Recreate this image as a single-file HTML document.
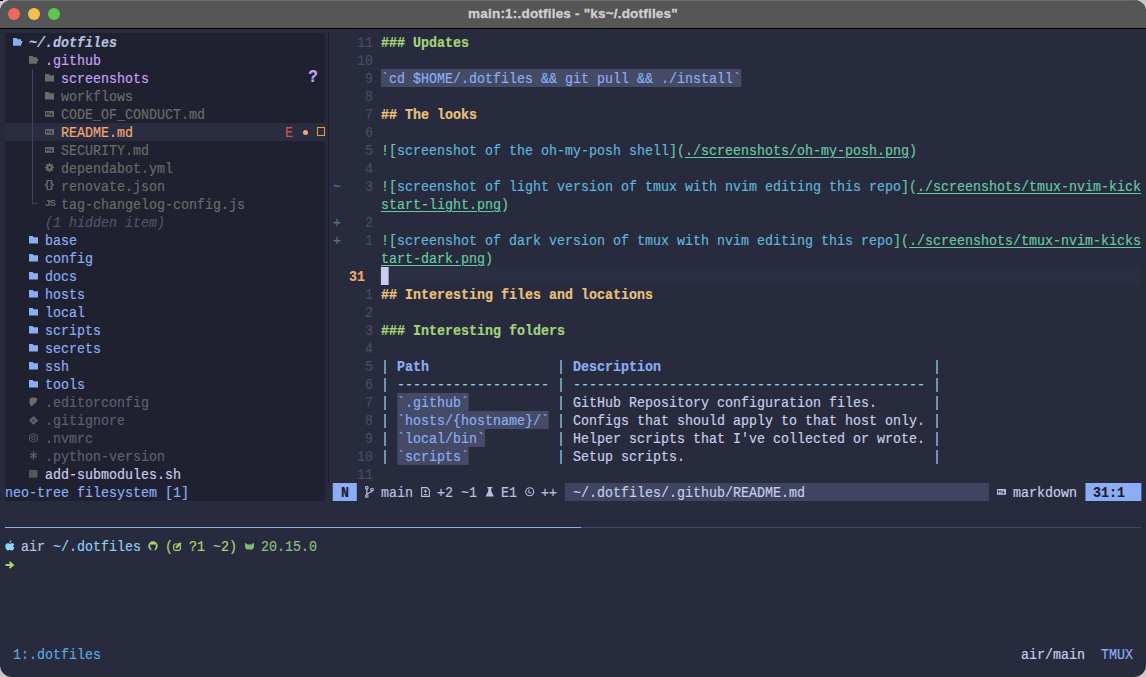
<!DOCTYPE html>
<html><head><meta charset="utf-8"><style>
html,body{margin:0;padding:0;width:1146px;height:677px;overflow:hidden;background:#c8c8c8}
#win{position:absolute;left:0;top:0;width:1146px;height:677px;border-radius:12px;overflow:hidden;background:#282b3d}
#title{position:absolute;left:0;top:0;width:1146px;height:28px;background:#565656;border-bottom:1px solid #000;box-shadow:inset 0 1px 0 #6a6a6a}
#title .tt{position:absolute;left:0;width:1146px;top:6px;text-align:center;-webkit-text-stroke:0.3px #d0d0d0;font:bold 13.5px "Liberation Sans",sans-serif;letter-spacing:0.2px;color:#d0d0d0}
.dot{position:absolute;top:8px;width:12px;height:12px;border-radius:50%}
#term{position:absolute;left:5px;top:33px;width:1320.6000000000001px;height:630px;transform:scaleX(0.860215);transform-origin:0 0}
.b{position:absolute}
.t{position:absolute;white-space:pre;-webkit-text-stroke:0.2px currentColor;font-family:"Liberation Mono",monospace;font-size:15.5px;line-height:18px;height:18px}
</style></head><body>
<div id="win">
<div id="title"><div class="dot" style="left:8px;background:#ed6a5e"></div><div class="dot" style="left:28px;background:#f5bf4f"></div><div class="dot" style="left:48px;background:#61c554"></div>
<div class="tt">main:1:.dotfiles - "ks~/.dotfiles"</div></div>
<div id="term">
<div class="b" style="left:0.00px;top:0px;width:372.00px;height:468px;background:#1f2131"></div>
<div class="b" style="left:0.00px;top:90px;width:372.00px;height:18px;background:#2a2d40"></div>
<div class="b" style="left:437.10px;top:36px;width:418.50px;height:18px;background:#454a66"></div>
<div class="b" style="left:437.10px;top:234px;width:883.50px;height:18px;background:#2a2e42"></div>
<div class="b" style="left:437.10px;top:234px;width:9.30px;height:18px;background:#c6cbf3"></div>
<div class="b" style="left:455.70px;top:360px;width:83.70px;height:18px;background:#454a66"></div>
<div class="b" style="left:455.70px;top:378px;width:176.70px;height:18px;background:#454a66"></div>
<div class="b" style="left:455.70px;top:396px;width:102.30px;height:18px;background:#454a66"></div>
<div class="b" style="left:455.70px;top:414px;width:83.70px;height:18px;background:#454a66"></div>
<div class="b" style="left:381.30px;top:450px;width:27.90px;height:18px;background:#8aadf4"></div>
<div class="b" style="left:651.00px;top:450px;width:492.90px;height:18px;background:#3f4461"></div>
<div class="b" style="left:1255.50px;top:450px;width:65.10px;height:18px;background:#8aadf4"></div>
<span class="t" style="left:27.90px;top:1px;color:#b8c0e0;font-weight:bold;font-style:italic">~/.dotfiles</span>
<span class="t" style="left:46.50px;top:19px;color:#c6a0f6">.github</span>
<span class="t" style="left:65.10px;top:37px;color:#c6a0f6">screenshots</span>
<span class="t" style="left:353.40px;top:37px;color:#c6a0f6;font-weight:bold;font-size:18.5px;margin-top:-1px;margin-left:-1px">?</span>
<span class="t" style="left:65.10px;top:55px;color:#6b6b67">workflows</span>
<span class="t" style="left:65.10px;top:73px;color:#6b6b67">CODE_OF_CONDUCT.md</span>
<span class="t" style="left:65.10px;top:91px;color:#f0a870">README.md</span>
<span class="t" style="left:325.50px;top:91px;color:#c9564e">E</span>
<span class="t" style="left:65.10px;top:109px;color:#6b6b67">SECURITY.md</span>
<span class="t" style="left:65.10px;top:127px;color:#6b6b67">dependabot.yml</span>
<span class="t" style="left:65.10px;top:145px;color:#6b6b67">renovate.json</span>
<span class="t" style="left:65.10px;top:163px;color:#6b6b67">tag-changelog-config.js</span>
<span class="t" style="left:46.50px;top:181px;color:#51546a;font-style:italic">(1 hidden item)</span>
<span class="t" style="left:46.50px;top:199px;color:#8aadf4">base</span>
<span class="t" style="left:46.50px;top:217px;color:#8aadf4">config</span>
<span class="t" style="left:46.50px;top:235px;color:#8aadf4">docs</span>
<span class="t" style="left:46.50px;top:253px;color:#8aadf4">hosts</span>
<span class="t" style="left:46.50px;top:271px;color:#8aadf4">local</span>
<span class="t" style="left:46.50px;top:289px;color:#8aadf4">scripts</span>
<span class="t" style="left:46.50px;top:307px;color:#8aadf4">secrets</span>
<span class="t" style="left:46.50px;top:325px;color:#8aadf4">ssh</span>
<span class="t" style="left:46.50px;top:343px;color:#8aadf4">tools</span>
<span class="t" style="left:46.50px;top:361px;color:#5d6070">.editorconfig</span>
<span class="t" style="left:46.50px;top:379px;color:#5d6070">.gitignore</span>
<span class="t" style="left:46.50px;top:397px;color:#5d6070">.nvmrc</span>
<span class="t" style="left:46.50px;top:415px;color:#5d6070">.python-version</span>
<span class="t" style="left:46.50px;top:433px;color:#c6cce9">add-submodules.sh</span>
<span class="t" style="left:0.00px;top:451px;color:#8aadf4">neo-tree filesystem [1]</span>
<span class="t" style="left:409.20px;top:1px;color:#494d64">11</span>
<span class="t" style="left:409.20px;top:19px;color:#494d64">10</span>
<span class="t" style="left:418.50px;top:37px;color:#494d64">9</span>
<span class="t" style="left:418.50px;top:55px;color:#494d64">8</span>
<span class="t" style="left:418.50px;top:73px;color:#494d64">7</span>
<span class="t" style="left:418.50px;top:91px;color:#494d64">6</span>
<span class="t" style="left:418.50px;top:109px;color:#494d64">5</span>
<span class="t" style="left:418.50px;top:127px;color:#494d64">4</span>
<span class="t" style="left:418.50px;top:145px;color:#494d64">3</span>
<span class="t" style="left:418.50px;top:181px;color:#494d64">2</span>
<span class="t" style="left:418.50px;top:199px;color:#494d64">1</span>
<span class="t" style="left:418.50px;top:253px;color:#494d64">1</span>
<span class="t" style="left:418.50px;top:271px;color:#494d64">2</span>
<span class="t" style="left:418.50px;top:289px;color:#494d64">3</span>
<span class="t" style="left:418.50px;top:307px;color:#494d64">4</span>
<span class="t" style="left:418.50px;top:325px;color:#494d64">5</span>
<span class="t" style="left:418.50px;top:343px;color:#494d64">6</span>
<span class="t" style="left:418.50px;top:361px;color:#494d64">7</span>
<span class="t" style="left:418.50px;top:379px;color:#494d64">8</span>
<span class="t" style="left:418.50px;top:397px;color:#494d64">9</span>
<span class="t" style="left:409.20px;top:415px;color:#494d64">10</span>
<span class="t" style="left:409.20px;top:433px;color:#494d64">11</span>
<span class="t" style="left:399.90px;top:235px;color:#f0a870;font-weight:bold">31</span>
<span class="t" style="left:381.30px;top:145px;color:#5a6d9c">~</span>
<span class="t" style="left:381.30px;top:181px;color:#4f7d62">+</span>
<span class="t" style="left:381.30px;top:199px;color:#4f7d62">+</span>
<span class="t" style="left:437.10px;top:1px;color:#a3d378;font-weight:bold">### Updates</span>
<span class="t" style="left:437.10px;top:37px;color:#8aadf4">`cd $HOME/.dotfiles &amp;&amp; git pull &amp;&amp; ./install`</span>
<span class="t" style="left:437.10px;top:73px;color:#e8c17a;font-weight:bold">## The looks</span>
<span class="t" style="left:437.10px;top:109px;color:#66c9a0">![</span>
<span class="t" style="left:455.70px;top:109px;color:#5fb4dc">screenshot of the oh-my-posh shell</span>
<span class="t" style="left:771.90px;top:109px;color:#66c9a0">](</span>
<span class="t" style="left:790.50px;top:109px;color:#66c9a0;text-decoration:underline;text-underline-offset:1.8px;text-decoration-thickness:1.3px">./screenshots/oh-my-posh.png</span>
<span class="t" style="left:1050.90px;top:109px;color:#66c9a0">)</span>
<span class="t" style="left:437.10px;top:145px;color:#66c9a0">![</span>
<span class="t" style="left:455.70px;top:145px;color:#5fb4dc">screenshot of light version of tmux with nvim editing this repo</span>
<span class="t" style="left:1041.60px;top:145px;color:#66c9a0">](</span>
<span class="t" style="left:1060.20px;top:145px;color:#66c9a0;text-decoration:underline;text-underline-offset:1.8px;text-decoration-thickness:1.3px">./screenshots/tmux-nvim-kick</span>
<span class="t" style="left:437.10px;top:163px;color:#66c9a0;text-decoration:underline;text-underline-offset:1.8px;text-decoration-thickness:1.3px">start-light.png</span>
<span class="t" style="left:576.60px;top:163px;color:#66c9a0">)</span>
<span class="t" style="left:437.10px;top:199px;color:#66c9a0">![</span>
<span class="t" style="left:455.70px;top:199px;color:#5fb4dc">screenshot of dark version of tmux with nvim editing this repo</span>
<span class="t" style="left:1032.30px;top:199px;color:#66c9a0">](</span>
<span class="t" style="left:1050.90px;top:199px;color:#66c9a0;text-decoration:underline;text-underline-offset:1.8px;text-decoration-thickness:1.3px">./screenshots/tmux-nvim-kicks</span>
<span class="t" style="left:437.10px;top:217px;color:#66c9a0;text-decoration:underline;text-underline-offset:1.8px;text-decoration-thickness:1.3px">tart-dark.png</span>
<span class="t" style="left:558.00px;top:217px;color:#66c9a0">)</span>
<span class="t" style="left:437.10px;top:253px;color:#e8c17a;font-weight:bold">## Interesting files and locations</span>
<span class="t" style="left:437.10px;top:289px;color:#a3d378;font-weight:bold">### Interesting folders</span>
<span class="t" style="left:437.10px;top:325px;color:#8ccfe0">|</span>
<span class="t" style="left:641.70px;top:325px;color:#8ccfe0">|</span>
<span class="t" style="left:1078.80px;top:325px;color:#8ccfe0">|</span>
<span class="t" style="left:455.70px;top:325px;color:#8aadf4;font-weight:bold">Path</span>
<span class="t" style="left:660.30px;top:325px;color:#8aadf4;font-weight:bold">Description</span>
<span class="t" style="left:437.10px;top:343px;color:#8ccfe0">|</span>
<span class="t" style="left:641.70px;top:343px;color:#8ccfe0">|</span>
<span class="t" style="left:1078.80px;top:343px;color:#8ccfe0">|</span>
<span class="t" style="left:455.70px;top:343px;color:#8ccfe0">-------------------</span>
<span class="t" style="left:660.30px;top:343px;color:#8ccfe0">--------------------------------------------</span>
<span class="t" style="left:437.10px;top:361px;color:#8ccfe0">|</span>
<span class="t" style="left:641.70px;top:361px;color:#8ccfe0">|</span>
<span class="t" style="left:1078.80px;top:361px;color:#8ccfe0">|</span>
<span class="t" style="left:455.70px;top:361px;color:#8aadf4">`.github`</span>
<span class="t" style="left:660.30px;top:361px;color:#c6cce9">GitHub Repository configuration files.</span>
<span class="t" style="left:437.10px;top:379px;color:#8ccfe0">|</span>
<span class="t" style="left:641.70px;top:379px;color:#8ccfe0">|</span>
<span class="t" style="left:1078.80px;top:379px;color:#8ccfe0">|</span>
<span class="t" style="left:455.70px;top:379px;color:#8aadf4">`hosts/{hostname}/`</span>
<span class="t" style="left:660.30px;top:379px;color:#c6cce9">Configs that should apply to that host only.</span>
<span class="t" style="left:437.10px;top:397px;color:#8ccfe0">|</span>
<span class="t" style="left:641.70px;top:397px;color:#8ccfe0">|</span>
<span class="t" style="left:1078.80px;top:397px;color:#8ccfe0">|</span>
<span class="t" style="left:455.70px;top:397px;color:#8aadf4">`local/bin`</span>
<span class="t" style="left:660.30px;top:397px;color:#c6cce9">Helper scripts that I&#x27;ve collected or wrote.</span>
<span class="t" style="left:437.10px;top:415px;color:#8ccfe0">|</span>
<span class="t" style="left:641.70px;top:415px;color:#8ccfe0">|</span>
<span class="t" style="left:1078.80px;top:415px;color:#8ccfe0">|</span>
<span class="t" style="left:455.70px;top:415px;color:#8aadf4">`scripts`</span>
<span class="t" style="left:660.30px;top:415px;color:#c6cce9">Setup scripts.</span>
<span class="t" style="left:390.60px;top:451px;color:#1e2030;font-weight:bold">N</span>
<span class="t" style="left:437.10px;top:451px;color:#b8c0e0">main</span>
<span class="t" style="left:502.20px;top:451px;color:#b8c0e0">+2</span>
<span class="t" style="left:530.10px;top:451px;color:#b8c0e0">~1</span>
<span class="t" style="left:576.60px;top:451px;color:#b8c0e0">E1</span>
<span class="t" style="left:623.10px;top:451px;color:#b8c0e0">++</span>
<span class="t" style="left:660.30px;top:451px;color:#c6cce9">~/.dotfiles/.github/README.md</span>
<span class="t" style="left:1171.80px;top:451px;color:#c6cce9">markdown</span>
<span class="t" style="left:1264.80px;top:451px;color:#1e2030;font-weight:bold">31:1</span>
<span class="t" style="left:18.60px;top:505px;color:#b8c0e0">air</span>
<span class="t" style="left:55.80px;top:505px;color:#8ccff2">~/.dotfiles</span>
<span class="t" style="left:186.00px;top:505px;color:#a8d46f">(</span>
<span class="t" style="left:213.90px;top:505px;color:#a8d46f">?1 ~2)</span>
<span class="t" style="left:297.60px;top:505px;color:#8cbf7a">20.15.0</span>
<span class="t" style="left:9.30px;top:613px;color:#5aa8e0">1:.dotfiles</span>
<span class="t" style="left:1181.10px;top:613px;color:#c6cce9">air/main</span>
<span class="t" style="left:1274.10px;top:613px;color:#8aadf4">TMUX</span>
</div>
<div id="ov"><svg style="position:absolute;left:13px;top:38px" width="10" height="8" viewBox="0 0 10 8"><path d="M0 0H3.6L4.8 1.3H8V3H9.6L7.8 7.8H0Z" fill="#8aadf4"/></svg>
<svg style="position:absolute;left:29px;top:56px" width="10" height="8" viewBox="0 0 10 8"><path d="M0 0H3.6L4.8 1.3H8V3H9.6L7.8 7.8H0Z" fill="#6b6b67"/></svg>
<svg style="position:absolute;left:45px;top:74px" width="9" height="8" viewBox="0 0 9 8"><path d="M0 0H3.6L4.8 1.3H9V7.6H0Z" fill="#6b6b67"/></svg>
<svg style="position:absolute;left:45px;top:92px" width="9" height="8" viewBox="0 0 9 8"><path d="M0 0H3.6L4.8 1.3H9V7.6H0Z" fill="#6b6b67"/></svg>
<svg style="position:absolute;left:45px;top:111px" width="9" height="6" viewBox="0 0 9 6"><rect x="0" y="0" width="9" height="5.8" rx="0.6" fill="#6b6b67"/><path d="M1.5 4.3V1.5L2.8 2.9L4.1 1.5V4.3M6.4 1.5V4.3M5.3 3.2L6.4 4.3L7.5 3.2" stroke="#1f2131" stroke-width="0.9" fill="none"/></svg>
<svg style="position:absolute;left:45px;top:129px" width="9" height="6" viewBox="0 0 9 6"><rect x="0" y="0" width="9" height="5.8" rx="0.6" fill="#6b6b67"/><path d="M1.5 4.3V1.5L2.8 2.9L4.1 1.5V4.3M6.4 1.5V4.3M5.3 3.2L6.4 4.3L7.5 3.2" stroke="#2a2d40" stroke-width="0.9" fill="none"/></svg>
<svg style="position:absolute;left:45px;top:147px" width="9" height="6" viewBox="0 0 9 6"><rect x="0" y="0" width="9" height="5.8" rx="0.6" fill="#6b6b67"/><path d="M1.5 4.3V1.5L2.8 2.9L4.1 1.5V4.3M6.4 1.5V4.3M5.3 3.2L6.4 4.3L7.5 3.2" stroke="#1f2131" stroke-width="0.9" fill="none"/></svg>
<svg style="position:absolute;left:45px;top:163px" width="9" height="9" viewBox="0 0 9 9"><circle cx="4.5" cy="4.5" r="3.2" fill="#6b6b67"/><path d="M4.5 0V9M0 4.5H9M1.3 1.3L7.7 7.7M7.7 1.3L1.3 7.7" stroke="#6b6b67" stroke-width="1.6"/><circle cx="4.5" cy="4.5" r="1.2" fill="#1f2131"/></svg>
<div style="position:absolute;left:44px;top:177px;width:12px;font:bold 11px/16px 'Liberation Mono',monospace;color:#6b6b67;letter-spacing:-2.5px">{}</div>
<div style="position:absolute;left:45px;top:195px;width:12px;font:bold 9.5px/16px 'Liberation Sans',sans-serif;color:#6b6b67;letter-spacing:-0.8px">JS</div>
<svg style="position:absolute;left:29px;top:236px" width="9" height="8" viewBox="0 0 9 8"><path d="M0 0H3.6L4.8 1.3H9V7.6H0Z" fill="#8aadf4"/></svg>
<svg style="position:absolute;left:29px;top:254px" width="9" height="8" viewBox="0 0 9 8"><path d="M0 0H3.6L4.8 1.3H9V7.6H0Z" fill="#8aadf4"/></svg>
<svg style="position:absolute;left:29px;top:272px" width="9" height="8" viewBox="0 0 9 8"><path d="M0 0H3.6L4.8 1.3H9V7.6H0Z" fill="#8aadf4"/></svg>
<svg style="position:absolute;left:29px;top:290px" width="9" height="8" viewBox="0 0 9 8"><path d="M0 0H3.6L4.8 1.3H9V7.6H0Z" fill="#8aadf4"/></svg>
<svg style="position:absolute;left:29px;top:308px" width="9" height="8" viewBox="0 0 9 8"><path d="M0 0H3.6L4.8 1.3H9V7.6H0Z" fill="#8aadf4"/></svg>
<svg style="position:absolute;left:29px;top:326px" width="9" height="8" viewBox="0 0 9 8"><path d="M0 0H3.6L4.8 1.3H9V7.6H0Z" fill="#8aadf4"/></svg>
<svg style="position:absolute;left:29px;top:344px" width="9" height="8" viewBox="0 0 9 8"><path d="M0 0H3.6L4.8 1.3H9V7.6H0Z" fill="#8aadf4"/></svg>
<svg style="position:absolute;left:29px;top:362px" width="9" height="8" viewBox="0 0 9 8"><path d="M0 0H3.6L4.8 1.3H9V7.6H0Z" fill="#8aadf4"/></svg>
<svg style="position:absolute;left:29px;top:380px" width="9" height="8" viewBox="0 0 9 8"><path d="M0 0H3.6L4.8 1.3H9V7.6H0Z" fill="#8aadf4"/></svg>
<div style="position:absolute;left:32px;top:69px;width:1px;height:135px;background:#3d4159"></div>
<div style="position:absolute;left:32px;top:203px;width:5px;height:1px;background:#3d4159"></div>
<svg style="position:absolute;left:29px;top:397px" width="9" height="10" viewBox="0 0 9 10"><path d="M0.5 1.5C3 0 6 0 8.5 1.5L7 5.5L2 9.5L0.5 6Z" fill="#6b6b67"/></svg>
<svg style="position:absolute;left:29px;top:416px" width="9" height="9" viewBox="0 0 9 9"><path d="M4.5 0L9 4.5L4.5 9L0 4.5Z" fill="#5d6070"/><circle cx="4.5" cy="4.5" r="0.9" fill="#1f2131"/></svg>
<svg style="position:absolute;left:29px;top:433px" width="9" height="10" viewBox="0 0 9 10"><path d="M4.5 0.5L8.3 2.7V7.1L4.5 9.3L0.7 7.1V2.7Z" fill="none" stroke="#5d6070" stroke-width="1"/><circle cx="4.5" cy="4.9" r="1.8" fill="none" stroke="#5d6070" stroke-width="0.9"/></svg>
<svg style="position:absolute;left:29px;top:451px" width="9" height="9" viewBox="0 0 9 9"><path d="M4.5 0.5V8.5M1 2.5L8 6.5M8 2.5L1 6.5" stroke="#5d6070" stroke-width="1.3"/></svg>
<svg style="position:absolute;left:29px;top:470px" width="9" height="8" viewBox="0 0 9 8"><rect width="8.5" height="7.7" fill="#505a5c"/><path d="M1.5 2L3 3.5L1.5 5" stroke="#3a4244" stroke-width="0.8" fill="none"/></svg>
<div style="position:absolute;left:303px;top:130px;width:5px;height:5px;border-radius:50%;background:#f0a870"></div>
<div style="position:absolute;left:317px;top:127px;width:8px;height:9px;box-sizing:border-box;border:1.6px solid #e89a3c"></div>
<div style="position:absolute;left:328px;top:33px;width:1px;height:450px;background:#1b1d2b"></div>
<svg style="position:absolute;left:365px;top:486px" width="9" height="12" viewBox="0 0 9 12"><circle cx="1.8" cy="1.8" r="1.3" fill="none" stroke="#b8c0e0" stroke-width="1.1"/><circle cx="7" cy="3.6" r="1.3" fill="none" stroke="#b8c0e0" stroke-width="1.1"/><circle cx="1.8" cy="10" r="1.3" fill="none" stroke="#b8c0e0" stroke-width="1.1"/><path d="M1.8 3.1V8.7M7 4.9C7 7 1.8 6.5 1.8 8.7" stroke="#b8c0e0" stroke-width="1.2" fill="none"/></svg>
<svg style="position:absolute;left:421px;top:487px" width="9" height="10" viewBox="0 0 9 10"><path d="M0.6 0.6H6L8.4 3V9.4H0.6Z" fill="none" stroke="#b8c0e0" stroke-width="1.1"/><path d="M4.5 2.5V6M2.8 4.2H6.2M2.8 7.5H6.2" stroke="#b8c0e0" stroke-width="1"/></svg>
<svg style="position:absolute;left:485px;top:487px" width="10" height="10" viewBox="0 0 10 10"><path d="M2.3 0.6H7.3" stroke="#b8c0e0" stroke-width="1.2"/><path d="M3.3 1V4L0.6 9.4H8.9L6.2 4V1Z" fill="#b8c0e0"/></svg>
<svg style="position:absolute;left:525px;top:487px" width="10" height="10" viewBox="0 0 10 10"><circle cx="4.7" cy="4.8" r="4" fill="none" stroke="#b8c0e0" stroke-width="1.1"/><path d="M3.8 2.5V5.8H6.3" stroke="#b8c0e0" stroke-width="1" fill="none"/></svg>
<svg style="position:absolute;left:997px;top:489px" width="9" height="6" viewBox="0 0 9 6"><rect x="0" y="0" width="9" height="5.8" rx="0.6" fill="#b8c0e0"/><path d="M1.5 4.3V1.5L2.8 2.9L4.1 1.5V4.3M6.4 1.5V4.3M5.3 3.2L6.4 4.3L7.5 3.2" stroke="#282b3d" stroke-width="0.9" fill="none"/></svg>
<div style="position:absolute;left:5px;top:527px;width:576px;height:1px;background:#8aadf4"></div>
<div style="position:absolute;left:581px;top:527px;width:560px;height:1px;background:#42466a"></div>
<svg style="position:absolute;left:5px;top:540px" width="10" height="11" viewBox="0 0 10 11"><path d="M5 3.2C5.8 2.4 6.5 1.3 6.6 0.3C5.6 0.5 4.6 1.4 4.5 2.6ZM9.4 7.4C9 8.7 8 10.6 6.8 10.6C6 10.6 5.8 10.1 4.9 10.1C4 10.1 3.7 10.6 3 10.6C1.7 10.6 0.3 8.4 0.3 6.3C0.3 4.2 1.6 3.2 2.8 3.2C3.8 3.2 4.3 3.8 5 3.8C5.7 3.8 6.1 3.2 7.2 3.2C8 3.2 8.8 3.6 9.3 4.4C7.8 5.2 8 7.1 9.4 7.4Z" fill="#8fd3f5"/></svg>
<svg style="position:absolute;left:5px;top:561px" width="10" height="8" viewBox="0 0 10 8"><path d="M0.5 4H7M4.5 1L8 4L4.5 7" stroke="#a6d86a" stroke-width="1.8" fill="none"/></svg>
<svg style="position:absolute;left:148px;top:541px" width="10" height="10" viewBox="0 0 10 10"><circle cx="5" cy="5" r="4.7" fill="#a8d46f"/><path d="M3.2 9.8V7.2C2.2 6.7 2 5.6 2.3 4.7L2.3 3L3.6 3.7C4.5 3.4 5.5 3.4 6.4 3.7L7.7 3L7.7 4.7C8 5.6 7.8 6.7 6.8 7.2V9.8Z" fill="#282b3d"/></svg>
<svg style="position:absolute;left:173px;top:542px" width="9" height="9" viewBox="0 0 9 9"><rect x="0.7" y="2" width="6.6" height="6.3" rx="1.5" fill="none" stroke="#a8d46f" stroke-width="1.2"/><path d="M3 5.8L7.8 1" stroke="#a8d46f" stroke-width="2"/></svg>
<svg style="position:absolute;left:245px;top:542px" width="9" height="8" viewBox="0 0 9 8"><path d="M0 0.5L2.5 2.5H6.5L9 0.5V5L7.5 7.5H1.5L0 5Z" fill="#7fb872"/></svg></div>
</div>
<div style="position:absolute;left:0;top:0;width:3px;height:1px;background:#000"></div>
</body></html>
